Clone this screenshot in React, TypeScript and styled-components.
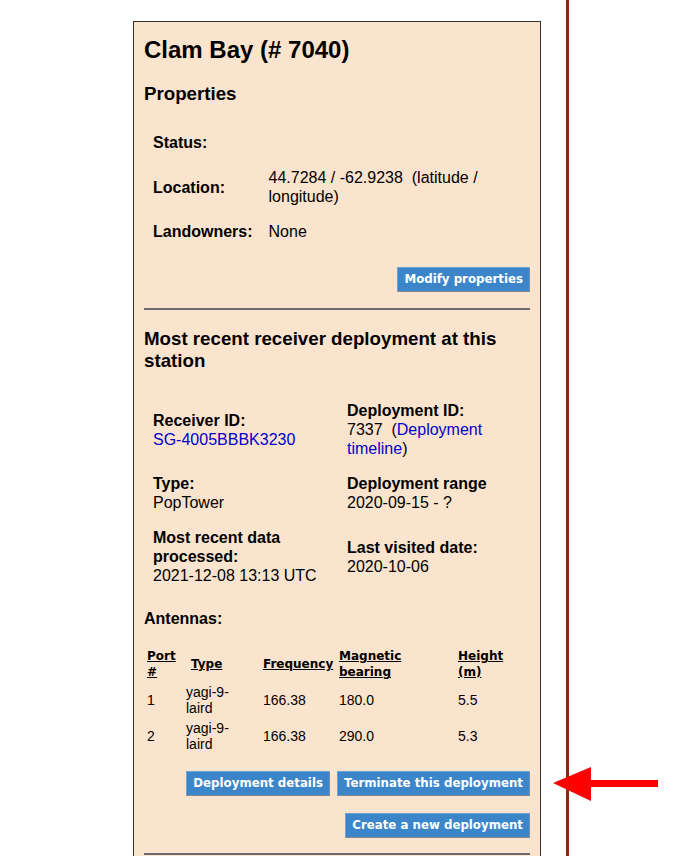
import React from "react";
import styled, { createGlobalStyle } from "styled-components";

const GlobalStyle = createGlobalStyle`
  html, body {
    margin: 0;
    padding: 0;
    background: #ffffff;
    color: #000000;
    font-family: "Liberation Sans", Arial, sans-serif;
  }
`;

const Page = styled.div`
  position: relative;
  display: flex;
  min-height: 856px;
  overflow: hidden;
`;

const LeftColumn = styled.div`
  box-sizing: border-box;
  width: 566px;
  padding: 21px 0 0 133px;
  flex: none;
`;

const Divider = styled.div`
  width: 3px;
  flex: none;
  background: #8a2a0a;
`;

const RightColumn = styled.div`
  flex: 1;
`;

const Panel = styled.div`
  box-sizing: border-box;
  width: 408px;
  min-height: 900px;
  padding: 14px 10px 0 10px;
  background: #fbe4cd;
  border: 1px solid #333333;
  border-bottom: none;
`;

const Title = styled.h2`
  margin: 0;
  font-size: 24px;
  line-height: 28px;
  font-weight: bold;
`;

const SectionTitle = styled.h3<{ $top: number; $bottom: number }>`
  margin: ${(p) => p.$top}px 0 ${(p) => p.$bottom}px 0;
  font-size: 18.72px;
  line-height: 22px;
  font-weight: bold;
`;

const PropTable = styled.table`
  border-collapse: separate;
  border-spacing: 2px;
  font-size: 16px;
  line-height: 19px;

  td {
    padding: 7px;
    vertical-align: middle;
  }
`;

const Label = styled.td`
  font-weight: bold;
`;

const ButtonRow = styled.div<{ $top: number }>`
  display: flex;
  justify-content: flex-end;
  gap: 7px;
  margin-top: ${(p) => p.$top}px;
`;

const Button = styled.button`
  box-sizing: border-box;
  height: 25px;
  padding: 4px 6px;
  font-family: "DejaVu Sans", Verdana, sans-serif;
  font-size: 11.8px;
  font-weight: bold;
  line-height: 15px;
  color: #ffffff;
  background: #3d85c9;
  border: 1px solid;
  border-color: #6aa3da #8c8c8c #8c8c8c #6aa3da;
  border-radius: 0;
  cursor: pointer;
`;

const Rule = styled.hr<{ $top: number; $bottom: number }>`
  margin: ${(p) => p.$top}px 0 ${(p) => p.$bottom}px 0;
  border: none;
  border-top: 2px solid #6b6b6b;
  height: 0;
`;

const DeployGrid = styled.div`
  display: grid;
  grid-template-columns: 194px 1fr;
  row-gap: 16px;
  align-items: center;
  margin-top: 29px;
  padding-left: 9px;
  font-size: 16px;
  line-height: 19px;
`;

const Field = styled.div``;

const FieldLabel = styled.div`
  font-weight: bold;
`;

const Link = styled.a`
  color: #0000cc;
  text-decoration: none;
`;

const SubLabel = styled.div`
  margin-top: 24px;
  font-size: 16px;
  line-height: 19px;
  font-weight: bold;
`;

const AntennaTable = styled.table`
  width: 386px;
  margin-top: 17px;
  table-layout: fixed;
  border-collapse: separate;
  border-spacing: 2px;

  th {
    padding: 1px;
    text-align: left;
    vertical-align: middle;
    font-family: "DejaVu Sans", Verdana, sans-serif;
    font-size: 12px;
    font-weight: bold;
    line-height: 16px;
    text-decoration: underline;
  }

  td {
    padding: 1px;
    vertical-align: middle;
    font-size: 14px;
    line-height: 16px;
  }
`;

const IndentedTh = styled.th`
  && {
    padding-left: 6px;
  }
`;

const TypeCell = styled.td`
  && {
    padding-right: 12px;
  }
`;

const ArrowMark = styled.svg`
  position: absolute;
  left: 553px;
  top: 766px;
`;

const antennas = [
  { port: "1", type: "yagi-9-laird", freq: "166.38", bearing: "180.0", height: "5.5" },
  { port: "2", type: "yagi-9-laird", freq: "166.38", bearing: "290.0", height: "5.3" },
];

export default function App() {
  return (
    <>
      <GlobalStyle />
      <Page>
        <LeftColumn>
          <Panel>
            <Title>Clam Bay (# 7040)</Title>
            <SectionTitle $top={19} $bottom={19}>
              Properties
            </SectionTitle>
            <PropTable>
              <tbody>
                <tr>
                  <Label>Status:</Label>
                  <td></td>
                </tr>
                <tr>
                  <Label>Location:</Label>
                  <td>
                    44.7284 / -62.9238&nbsp; (latitude /
                    <br />
                    longitude)
                  </td>
                </tr>
                <tr>
                  <Label>Landowners:</Label>
                  <td>None</td>
                </tr>
              </tbody>
            </PropTable>
            <ButtonRow $top={17}>
              <Button>Modify properties</Button>
            </ButtonRow>
            <Rule $top={16} $bottom={18} />
            <SectionTitle $top={0} $bottom={0}>
              Most recent receiver deployment at this station
            </SectionTitle>
            <DeployGrid>
              <Field>
                <FieldLabel>Receiver ID:</FieldLabel>
                <Link href="#">SG-4005BBBK3230</Link>
              </Field>
              <Field>
                <FieldLabel>Deployment ID:</FieldLabel>
                7337&nbsp; (<Link href="#">Deployment timeline</Link>)
              </Field>
              <Field>
                <FieldLabel>Type:</FieldLabel>
                PopTower
              </Field>
              <Field>
                <FieldLabel>Deployment range</FieldLabel>
                2020-09-15 - ?
              </Field>
              <Field>
                <FieldLabel>Most recent data processed:</FieldLabel>
                2021-12-08 13:13 UTC
              </Field>
              <Field>
                <FieldLabel>Last visited date:</FieldLabel>
                2020-10-06
              </Field>
            </DeployGrid>
            <SubLabel>Antennas:</SubLabel>
            <AntennaTable>
              <colgroup>
                <col style={{ width: 37 }} />
                <col style={{ width: 75 }} />
                <col style={{ width: 74 }} />
                <col style={{ width: 117 }} />
                <col style={{ width: 71 }} />
              </colgroup>
              <thead>
                <tr>
                  <th>Port #</th>
                  <IndentedTh>Type</IndentedTh>
                  <th>Frequency</th>
                  <th>Magnetic bearing</th>
                  <th>Height (m)</th>
                </tr>
              </thead>
              <tbody>
                {antennas.map((a) => (
                  <tr key={a.port}>
                    <td>{a.port}</td>
                    <TypeCell>{a.type}</TypeCell>
                    <td>{a.freq}</td>
                    <td>{a.bearing}</td>
                    <td>{a.height}</td>
                  </tr>
                ))}
              </tbody>
            </AntennaTable>
            <ButtonRow $top={16}>
              <Button>Deployment details</Button>
              <Button>Terminate this deployment</Button>
            </ButtonRow>
            <ButtonRow $top={17}>
              <Button>Create a new deployment</Button>
            </ButtonRow>
            <Rule $top={15} $bottom={17} />
          </Panel>
        </LeftColumn>
        <Divider />
        <RightColumn />
        <ArrowMark width="106" height="36" viewBox="0 0 106 36">
          <polygon
            points="0,17 38,1 38,14 105,14 105,21 38,21 38,35"
            fill="#ff0000"
          />
        </ArrowMark>
      </Page>
    </>
  );
}
